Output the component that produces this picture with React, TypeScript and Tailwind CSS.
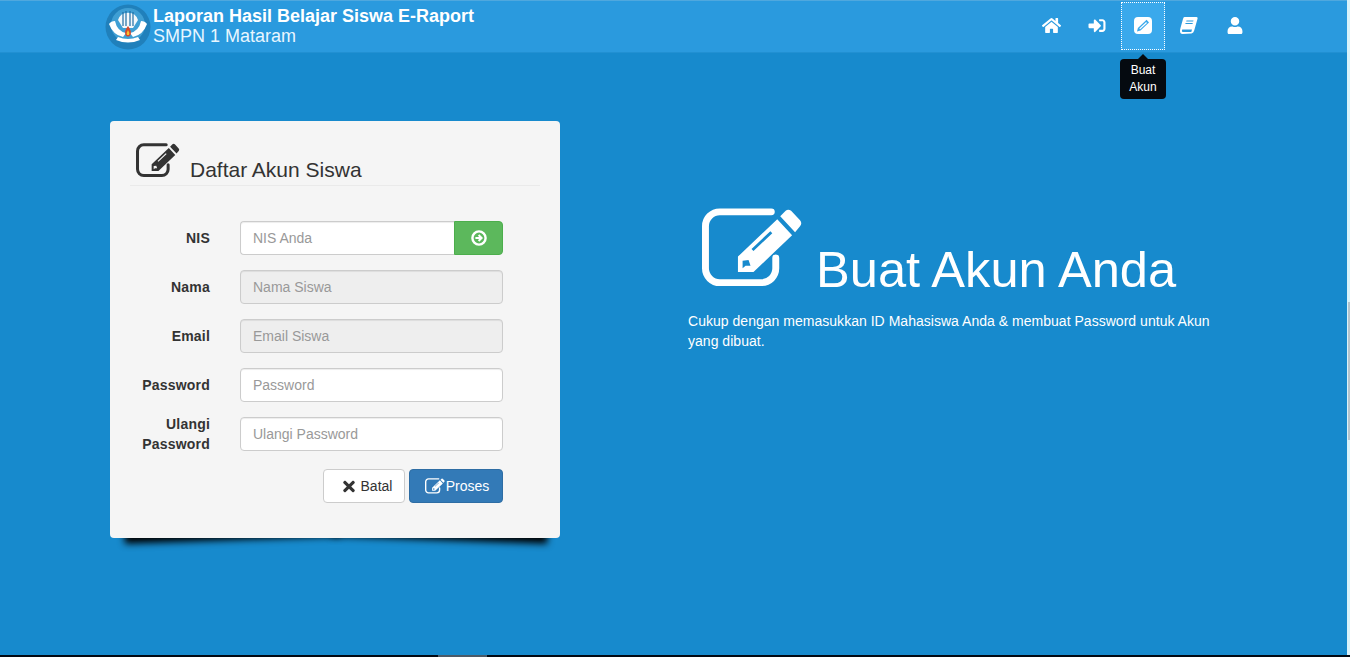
import { FaHome, FaSignInAlt, FaUser, FaTimes } from 'react-icons/fa';

// pencil-square outline, used in three sizes
function EditIcon({ className }: { className: string }) {
  return (
    <svg viewBox="0 0 102 80" className={className} fill="currentColor">
      <path d="M70 3.5H18A14.5 14.5 0 0 0 3.5 18V60.5A14.5 14.5 0 0 0 18 75H60A14.5 14.5 0 0 0 74.5 60.5V50" fill="none" stroke="currentColor" strokeWidth="7" strokeLinecap="round" />
      <path fillRule="evenodd" d="M36.3 48.7L76 11L91 27L52 64.3H36.3ZM50 41L69 23L71 25L52 43ZM41 53L47 52L49 58L44 58L41 60.5Z" />
      <path d="M79 8L84.5 2.5Q87 0 90 2.5L99 12Q101.5 15 99 18L94 24Z" />
    </svg>
  );
}

function NavEditIcon() {
  return (
    <svg viewBox="0 0 18 17" className="w-[18px] h-[17px]" fill="white">
      <path fillRule="evenodd" d="M4 0H14Q18 0 18 4V13Q18 17 14 17H4Q0 17 0 13V4Q0 0 4 0ZM12.6 2.8L3.9 11L3 14.4L6.5 13.6L15 5.4ZM12.1 5L13 5.9L6.2 12.2L5.3 11.4Z" />
    </svg>
  );
}

function NavBookIcon() {
  return (
    <svg viewBox="0 0 18 17" className="w-[18px] h-[17px]" fill="white">
      <path fillRule="evenodd" d="M4.5 0H16.5Q18 0 17.6 1.6L14.2 13.4Q13.6 15.6 11.5 16.5L2.5 17Q0 17 0 14Q0 12.5 .6 10.5L3 2Q3.4 0 4.5 0ZM6.5 3.5H13.5L13.2 4.6H6.2ZM5.6 6H12.8L12.5 7.1H5.3ZM2.2 12.6H12L11.3 15H3Q1.9 15 1.9 14Z" />
    </svg>
  );
}

function CircleArrow() {
  return (
    <svg viewBox="0 0 16 16" className="w-[16px] h-[16px]" fill="none" stroke="white">
      <circle cx="8" cy="8" r="6.6" strokeWidth="2.4" />
      <path d="M4.4 8H10M7.6 5L10.6 8L7.6 11" strokeWidth="2" />
    </svg>
  );
}

function Logo() {
  return (
    <svg viewBox="0 0 46 46" className="w-[46px] h-[46px] shrink-0">
      <circle cx="23" cy="23" r="22.5" fill="#2080bb" />
      <circle cx="23" cy="21" r="17" fill="#3f9fd4" />
      <path d="M13 16A10.5 10.5 0 0 1 33 16L28 24H18Z" fill="#f4f8fb" />
      <path d="M18 8V22M21 7V22M25 7V22M28 8V22" stroke="#1f6fa5" strokeWidth="1.2" />
      <path d="M4 20Q8 31 18 33L21 29Q12 27 10 17Q6 17 4 20ZM42 20Q38 31 28 33L25 29Q34 27 36 17Q40 17 42 20Z" fill="#ffffff" />
      <path d="M23 22Q27 27 25.5 31Q23 34 20.5 31Q19 27 23 22Z" fill="#d8472b" />
      <path d="M23 26Q25 29 24 31H22Q21 29 23 26Z" fill="#f4c430" />
      <path d="M11 36Q23 41 35 36L33 33Q23 37 13 33Z" fill="#ffffff" />
    </svg>
  );
}

function Field({ label, placeholder, disabled, type }: { label: string; placeholder: string; disabled?: boolean; type?: string }) {
  return (
    <div className="h-[34px] flex items-center gap-[30px]">
      <label className="w-[80px] text-right text-[14px] leading-[20px] tracking-[0.2px] font-bold text-[#333]">{label}</label>
      <input
        type={type ?? 'text'}
        placeholder={placeholder}
        disabled={disabled}
        className={`w-[263px] h-[34px] px-[12px] text-[14px] border border-[#ccc] rounded-[4px] shadow-[inset_0_1px_1px_rgba(0,0,0,0.075)] outline-none placeholder:text-[#999] ${disabled ? 'bg-[#eee]' : 'bg-white'}`}
      />
    </div>
  );
}

export default function App() {
  return (
    <div className="h-[657px] flex flex-col overflow-hidden bg-[#178acd] font-['Liberation_Sans',Arial,sans-serif]">
      <div className="flex-1 flex min-h-0">
        <div className="flex-1 min-w-0 flex flex-col">
          <header className="h-[53px] shrink-0 bg-[#2a9ade] border-t border-[#4fa8de] border-b border-b-[#2190d2] flex items-center pl-[105px] pr-[89px]">
            <Logo />
            <div className="ml-[2px] text-[18px] leading-[20px] text-white -mt-[1px]">
              <div className="font-bold">Laporan Hasil Belajar Siswa E-Raport</div>
              <div className="text-[#e8f6ff]">SMPN 1 Mataram</div>
            </div>
            <nav className="ml-auto -mt-[2px] flex items-center text-white">
              <a className="w-[46px] h-[48px] flex items-center justify-center"><FaHome className="w-[19px] h-[17px]" /></a>
              <a className="w-[46px] h-[48px] flex items-center justify-center"><FaSignInAlt className="w-[18px] h-[17px]" /></a>
              <a className="relative w-[44px] h-[48px] mx-[1px] flex items-center justify-center bg-[#3aa9ec] border border-dotted border-white">
                <NavEditIcon />
                <span className="absolute top-[56px] left-1/2 -translate-x-1/2 w-[46px] h-[40px] bg-[#050a10] rounded-[4px] text-white text-[12px] leading-[17px] text-center py-[3px]">
                  Buat Akun
                  <span className="absolute -top-[5px] left-1/2 -translate-x-1/2 w-0 h-0 border-x-[5px] border-x-transparent border-b-[5px] border-b-[#050a10]" />
                </span>
              </a>
              <a className="w-[46px] h-[48px] flex items-center justify-center"><NavBookIcon /></a>
              <a className="w-[46px] h-[48px] flex items-center justify-center"><FaUser className="w-[16px] h-[17px]" /></a>
            </nav>
          </header>

          <main className="flex pt-[68px] pl-[110px]">
            <div className="relative w-[450px] h-[417px] isolate">
              {/* two tilted shadows so the middle of the edge stays lighter */}
              <span className="absolute -z-10 left-[14px] bottom-[10px] w-[48%] h-[20px] -rotate-2 shadow-[0_12px_7px_#000]" />
              <span className="absolute -z-10 right-[12px] bottom-[10px] w-[48%] h-[20px] rotate-2 shadow-[0_12px_7px_#000]" />
              <div className="h-full bg-[#f5f5f5] rounded-[4px] px-[20px] pt-[22px]">
                <div className="flex items-end pl-[6px] pb-[3px] border-b border-[#eaeaea] h-[43px]">
                  <EditIcon className="w-[44px] h-[35px] text-[#333] mb-[4px]" />
                  <h3 className="ml-[10px] text-[21px] leading-[24px] text-[#333]">Daftar Akun Siswa</h3>
                </div>
                <form className="mt-[35px] flex flex-col gap-[15px]">
                  <div className="h-[34px] flex items-center gap-[30px]">
                    <label className="w-[80px] text-right text-[14px] leading-[20px] tracking-[0.2px] font-bold text-[#333]">NIS</label>
                    <div className="flex w-[263px]">
                      <input placeholder="NIS Anda" className="flex-1 min-w-0 h-[34px] px-[12px] text-[14px] bg-white border border-r-0 border-[#ccc] rounded-l-[4px] shadow-[inset_0_1px_1px_rgba(0,0,0,0.075)] outline-none placeholder:text-[#999]" />
                      <button type="button" className="w-[49px] h-[34px] bg-[#5cb85c] border border-[#4cae4c] rounded-r-[4px] text-white flex items-center justify-center">
                        <CircleArrow />
                      </button>
                    </div>
                  </div>
                  <Field label="Nama" placeholder="Nama Siswa" disabled />
                  <Field label="Email" placeholder="Email Siswa" disabled />
                  <Field label="Password" placeholder="Password" type="password" />
                  <Field label="Ulangi Password" placeholder="Ulangi Password" type="password" />
                  <div className="mt-[3px] pr-[37px] flex justify-end gap-[4px]">
                    <button type="button" className="w-[82px] h-[34px] pl-[5px] bg-white border border-[#ccc] rounded-[4px] text-[14px] text-[#333] flex items-center justify-center gap-[4px]">
                      <FaTimes className="w-[16px] h-[17px]" />
                      Batal
                    </button>
                    <button type="button" className="w-[94px] h-[34px] pl-[2px] bg-[#337ab7] border border-[#2e6da4] rounded-[4px] text-[14px] text-white flex items-center justify-center gap-[1px]">
                      <EditIcon className="w-[20px] h-[16px]" />
                      Proses
                    </button>
                  </div>
                </form>
              </div>
            </div>

            <section className="ml-[128px] w-[530px] pt-[86px] text-white">
              <div className="flex items-end pl-[14px] h-[81px]">
                <EditIcon className="w-[101px] h-[80px] shrink-0" />
                <h1 className="ml-[13px] text-[50.6px] leading-[58px] -mb-[11px] whitespace-nowrap">Buat Akun Anda</h1>
              </div>
              <p className="mt-[23px] text-[14px] leading-[20px] tracking-[0.025px]">
                Cukup dengan memasukkan ID Mahasiswa Anda &amp; membuat Password untuk Akun yang dibuat.
              </p>
            </section>
          </main>
        </div>

        {/* window scrollbar sliver on the right */}
        <div className="w-[3px] shrink-0 bg-[#d9f3fb] pt-[302px]">
          <div className="ml-px h-[138px] bg-[#b5c4cc]" />
        </div>
      </div>
      <div className="h-[2px] shrink-0 bg-[#020a14]">
        <div className="ml-[438px] w-[49px] h-full bg-[#4a5a68]" />
      </div>
    </div>
  );
}
